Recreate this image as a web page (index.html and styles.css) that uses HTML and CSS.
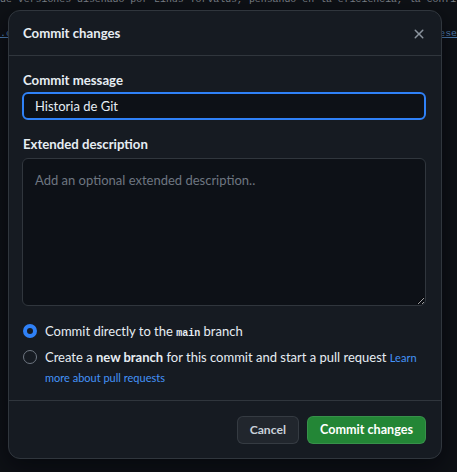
FILE: index.html
```html
<!DOCTYPE html>
<html lang="es">
<head>
<meta charset="utf-8">
<title>Commit changes</title>
<link rel="stylesheet" href="styles.css">
</head>
<body>
<div class="page">
  <p class="page-line first">de versiones diseñado por Linus Torvalds, pensando en la eficiencia, la confi</p>
  <p class="page-line second"><a class="page-link">.c</a><a class="page-link">ese</a></p>
</div>

<div class="dialog" role="dialog" aria-label="Commit changes">
  <div class="dialog-header">
    <h1 class="dialog-title">Commit changes</h1>
    <button class="close-btn" aria-label="Close">
      <svg viewBox="0 0 16 16" width="16" height="16"><path fill="currentColor" d="M3.72 3.72a.75.75 0 0 1 1.06 0L8 6.94l3.22-3.22a.749.749 0 0 1 1.275.326.749.749 0 0 1-.215.734L9.06 8l3.22 3.22a.749.749 0 0 1-.326 1.275.749.749 0 0 1-.734-.215L8 9.06l-3.22 3.22a.751.751 0 0 1-1.042-.018.751.751 0 0 1-.018-1.042L6.94 8 3.72 4.78a.75.75 0 0 1 0-1.06Z"/></svg>
    </button>
  </div>
  <div class="dialog-body">
    <label class="field-label" for="msg">Commit message</label>
    <input id="msg" class="text-input" type="text" value="Historia de Git">
    <label class="field-label second" for="desc">Extended description</label>
    <textarea id="desc" class="text-area" placeholder="Add an optional extended description.."></textarea>
    <div class="options">
      <label class="option">
        <span class="radio checked"></span>
        <span class="option-text">Commit directly to the <code class="mono">main</code> branch</span>
      </label>
      <label class="option">
        <span class="radio"></span>
        <span class="option-text">Create a <strong>new branch</strong> for this commit and start a pull request <a class="learn-link">Learn</a> <a class="learn-link">more about pull requests</a></span>
      </label>
    </div>
  </div>
  <div class="dialog-footer">
    <button class="btn btn-cancel">Cancel</button>
    <button class="btn btn-primary">Commit changes</button>
  </div>
</div>
</body>
</html>
```

FILE: styles.css
```css
* { box-sizing: border-box; }

html, body {
  margin: 0;
  height: 100%;
}

body {
  background: #0e1116;
  overflow: hidden;
  font-family: Lato, "Noto Sans", "Liberation Sans", sans-serif;
  color: #e6edf3;
  position: relative;
}

.page {
  font-family: "Liberation Mono", "DejaVu Sans Mono", monospace;
  font-size: 9.9px;
  line-height: 12px;
  color: #7b8088;
  white-space: nowrap;
}

.page-line {
  margin: 0;
}

.page-line.first {
  margin-top: -6px;
}

.page-line.second {
  margin-top: 22px;
  display: flex;
  justify-content: space-between;
}

.page-link {
  color: #4f7fb3;
  text-decoration: underline;
}

.dialog {
  position: absolute;
  left: 8px;
  top: 10px;
  width: 434px;
  background: #161b22;
  border: 1px solid #30363d;
  border-radius: 12px;
  box-shadow: 0 8px 24px rgba(1, 4, 9, 0.6);
}

.dialog-header {
  height: 45px;
  display: flex;
  align-items: center;
  justify-content: space-between;
  padding: 0 14px 0 14px;
  border-bottom: 1px solid #30363d;
}

.dialog-title {
  margin: 0;
  font-size: 13.2px;
  font-weight: 700;
  line-height: 20px;
  color: #e6edf3;
}

.close-btn {
  background: none;
  border: 0;
  padding: 0;
  width: 16px;
  height: 16px;
  color: #8b949e;
  display: flex;
  margin-top: 1px;
}

.dialog-body {
  padding: 14px 15px 13px 13px;
  display: flex;
  flex-direction: column;
  border-bottom: 1px solid #30363d;
}

.field-label {
  font-size: 13.2px;
  font-weight: 700;
  line-height: 20px;
  margin: 0 0 2px 1px;
  color: #e6edf3;
}

.field-label.second {
  margin-top: 14px;
  margin-bottom: 4px;
}

.text-input {
  height: 28px;
  width: 100%;
  background: #0d1117;
  border: 2px solid #2f81f7;
  border-radius: 6px;
  padding: 0 11px;
  font: inherit;
  font-size: 13px;
  color: #e6edf3;
  outline: none;
}

.text-area {
  height: 148px;
  width: 100%;
  background: #0d1117;
  border: 1px solid #30363d;
  border-radius: 6px;
  padding: 11px 12px;
  font: inherit;
  font-size: 13px;
  line-height: 20px;
  color: #e6edf3;
  resize: vertical;
  outline: none;
}

.text-area::placeholder {
  color: #6e7681;
}

.options {
  margin-top: 15px;
  display: flex;
  flex-direction: column;
  gap: 6px;
}

.option {
  display: flex;
  align-items: flex-start;
  gap: 8px;
  font-size: 13px;
  line-height: 20px;
  color: #e6edf3;
}

.option-text {
  display: block;
}

.radio {
  flex: none;
  width: 14px;
  height: 14px;
  margin: 3px 0 0 1px;
  border-radius: 50%;
  border: 1px solid #6e7681;
}

.radio.checked {
  border: 4px solid #2f81f7;
}

.mono {
  font-family: "Liberation Mono", "DejaVu Sans Mono", monospace;
  font-size: 10px;
  font-weight: 700;
  line-height: 1;
}

.option-text strong {
  font-weight: 700;
}

.learn-link {
  color: #4493f8;
  font-size: 11px;
  line-height: 1;
}

.dialog-footer {
  display: flex;
  justify-content: flex-end;
  gap: 8px;
  padding: 15px 15px 14px;
}

.btn {
  height: 28px;
  padding: 0 12px;
  border-radius: 6px;
  border: 1px solid rgba(240, 246, 252, 0.1);
  font-family: inherit;
  font-size: 12.6px;
  font-weight: 700;
  line-height: 20px;
}

.btn-cancel {
  background: #21262d;
  color: #c9d1d9;
  font-size: 12.2px;
}

.btn-primary {
  background: #238636;
  color: #ffffff;
}
```
